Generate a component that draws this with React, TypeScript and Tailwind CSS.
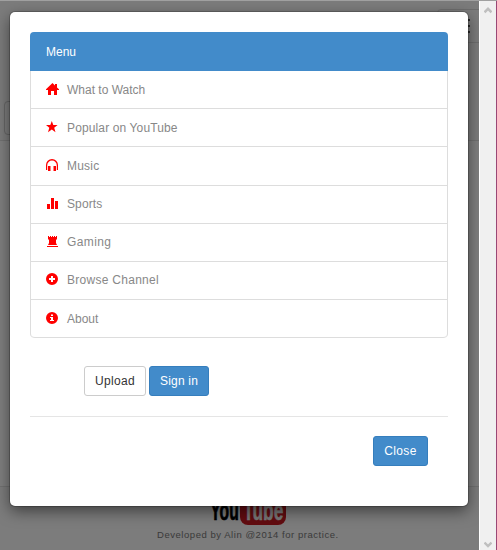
import type { ReactNode } from "react";

type Item = { label: string; icon: ReactNode; row: string; text: string; iconPos: string };

const items: Item[] = [
  { label: "What to Watch", row: "h-[38px]", iconPos: "mt-[12px]", text: "mt-[11px]", icon: <path d="M6.5 0 L9 2.5 V1 H11 V4.5 L13 6.2 V7 H11 V12 H8 V8 H5 V12 H2 V7 H0 V6.2 Z" /> },
  { label: "Popular on YouTube", row: "h-[38px]", iconPos: "mt-[12px]", text: "mt-[11px] tracking-[0.13px]", icon: <path d="M5.8 0 L7.3 4 H11.6 L8.2 6.8 L9.5 11.2 L5.8 8.6 L2 11.2 L3.3 6.8 L0 4 H4.3 Z" /> },
  { label: "Music", row: "h-[39px]", iconPos: "mt-[12px]", text: "mt-[11px] tracking-[0.2px]", icon: <path d="M0 11 V6 A6 6 0 0 1 12 6 V11 H10.8 V6.5 A4.8 4.9 0 0 0 1.2 6.5 V11 Z M2 7 H4.5 V12 H2 Z M7.5 7 H10 V12 H7.5 Z" /> },
  { label: "Sports", row: "h-[38px]", iconPos: "mt-[12px]", text: "mt-[10px] tracking-[0.1px]", icon: <path d="M1 6 H4 V11 H1 Z M5 0 H8 V11 H5 Z M9 3 H12 V11 H9 Z" /> },
  { label: "Gaming", row: "h-[38px]", iconPos: "mt-[12px]", text: "mt-[10px] tracking-[0.4px]", icon: <path d="M2 0 H3 V1 H4 V0 H5 V1 H6 V0 H7 V1 H8 V0 H9 V1 H10 V0 H11 V3 L10 4 V7 L11 9 H2 L3 7 V4 L2 3 Z M1 10 H12 V11 H1 Z" /> },
  { label: "Browse Channel", row: "h-[38px]", iconPos: "mt-[11px]", text: "mt-[10px] tracking-[0.28px]", icon: <path fillRule="evenodd" d="M6 0 A6 6 0 1 1 6 12 A6 6 0 1 1 6 0 Z M5 3 V5 H3 V7 H5 V9 H7 V7 H9 V5 H7 V3 Z" /> },
  { label: "About", row: "h-[38px]", iconPos: "mt-[12px]", text: "mt-[11px]", icon: <path fillRule="evenodd" d="M6 0 A6 6 0 1 1 6 12 A6 6 0 1 1 6 0 Z M5 2.5 V4 H7 V2.5 Z M4 5 V6 H5 V8 H4 V9 H8 V8 H7 V5 Z" /> },
];

function Page() {
  return (
    <div className="flex h-full flex-col overflow-hidden bg-white">
      <header className="flex h-[140px] shrink-0 flex-col justify-between border-b border-[#e2e2e2] bg-[#f8f8f8] pt-[8px] pb-[5px]">
        <div className="ml-[437px] flex h-[34px] w-[50px] flex-col justify-center gap-[4px] rounded border border-[#dddddd] pl-[10px]">
          <i className="h-[2px] w-[22px] bg-[#555555]" />
          <i className="h-[2px] w-[22px] bg-[#555555]" />
          <i className="h-[2px] w-[22px] bg-[#555555]" />
        </div>
        <div className="ml-[4px] h-[34px] w-[42px] rounded border border-[#cccccc]" />
      </header>
      <main className="flex-1" />
      <footer className="flex h-[64px] flex-col items-center border-t border-[#e2e2e2] bg-[#f8f8f8] pt-[9px]">
        <div className="ml-[19px] flex h-[29px] w-[76px] shrink-0 gap-[2px] font-['Liberation_Sans',Arial,sans-serif] text-[27px] font-bold leading-[31px]">
          <span className="flex w-[27px] justify-center text-black [-webkit-text-stroke:0.7px_black]"><span className="origin-center scale-x-[0.58]">You</span></span>
          <span className="flex w-[46px] justify-center rounded-[8px] bg-[#c41820] text-[#f0f0f0] [-webkit-text-stroke:0.5px_#f0f0f0]"><span className="origin-center scale-x-[0.64]">Tube</span></span>
        </div>
        <p className="ml-[17px] mt-[2px] w-[182px] whitespace-nowrap text-[9.5px] leading-[15px] tracking-[0.54px] text-[#777777]">Developed by Alin @2014 for practice.</p>
      </footer>
    </div>
  );
}

export default function App() {
  return (
    <div className="relative flex h-[550px] w-[497px] overflow-hidden border-t border-[#a0a0a0] font-['Liberation_Sans',Arial,sans-serif] text-[12px] leading-[17px]">
      <div className="h-full w-[479px] shrink-0"><Page /></div>
      <div className="absolute top-0 left-0 h-full w-[479px] overflow-hidden bg-black/50">
        <section className="mt-[11px] ml-[10px] h-[494px] w-[458px] rounded-[5px] bg-white px-[20px] pt-[20px] shadow-[0_5px_15px_rgba(0,0,0,0.5),0_0_0_1px_rgba(0,0,0,0.2)]">
          <div className="overflow-hidden rounded">
            <div className="h-[39px] bg-[#428bca] pt-[12px] pl-[16px] text-white">Menu</div>
            <ul className="rounded-b border-x border-[#dddddd] text-[#888888]">
              {items.map((item) => (
                <li key={item.label} className={`${item.row} flex items-start gap-[8px] border-b border-[#dddddd] pl-[15px] last:rounded-b`}>
                  <svg className={item.iconPos} width="13" height="13" viewBox="0 0 13 13" fill="#ff0000">{item.icon}</svg>
                  <span className={item.text}>{item.label}</span>
                </li>
              ))}
            </ul>
          </div>
          <div className="mt-[28px] ml-[54px] flex gap-[3px]">
            <button className="h-[30px] w-[62px] rounded-[3px] border border-[#cccccc] tracking-[0.35px] text-[#333333]">Upload</button>
            <button className="h-[30px] w-[60px] rounded-[3px] border border-[#357ebd] bg-[#428bca] tracking-[0.2px] text-white">Sign in</button>
          </div>
          <footer className="mt-[20px] flex justify-end border-t border-[#e5e5e5] pt-[19px] pr-[20px]">
            <button className="h-[30px] w-[55px] rounded-[3px] border border-[#357ebd] bg-[#428bca] tracking-[0.4px] text-white">Close</button>
          </footer>
        </section>
      </div>
      <aside className="flex w-[18px] shrink-0 flex-col items-start justify-between border-l border-white bg-[#f0f0f0] pt-[6px] pb-[2px] pl-[4px] shadow-[inset_-1px_0_#9a4775]">
        <svg width="8" height="7" viewBox="0 0 8 7" fill="none" stroke="#bfbfbf" strokeWidth="2.4"><path d="M0.5 5.3 L4 1.8 L7.5 5.3" /></svg>
        <svg width="8" height="7" viewBox="0 0 8 7" fill="none" stroke="#bfbfbf" strokeWidth="2.4"><path d="M0.5 1.5 L4 5 L7.5 1.5" /></svg>
      </aside>
    </div>
  );
}
